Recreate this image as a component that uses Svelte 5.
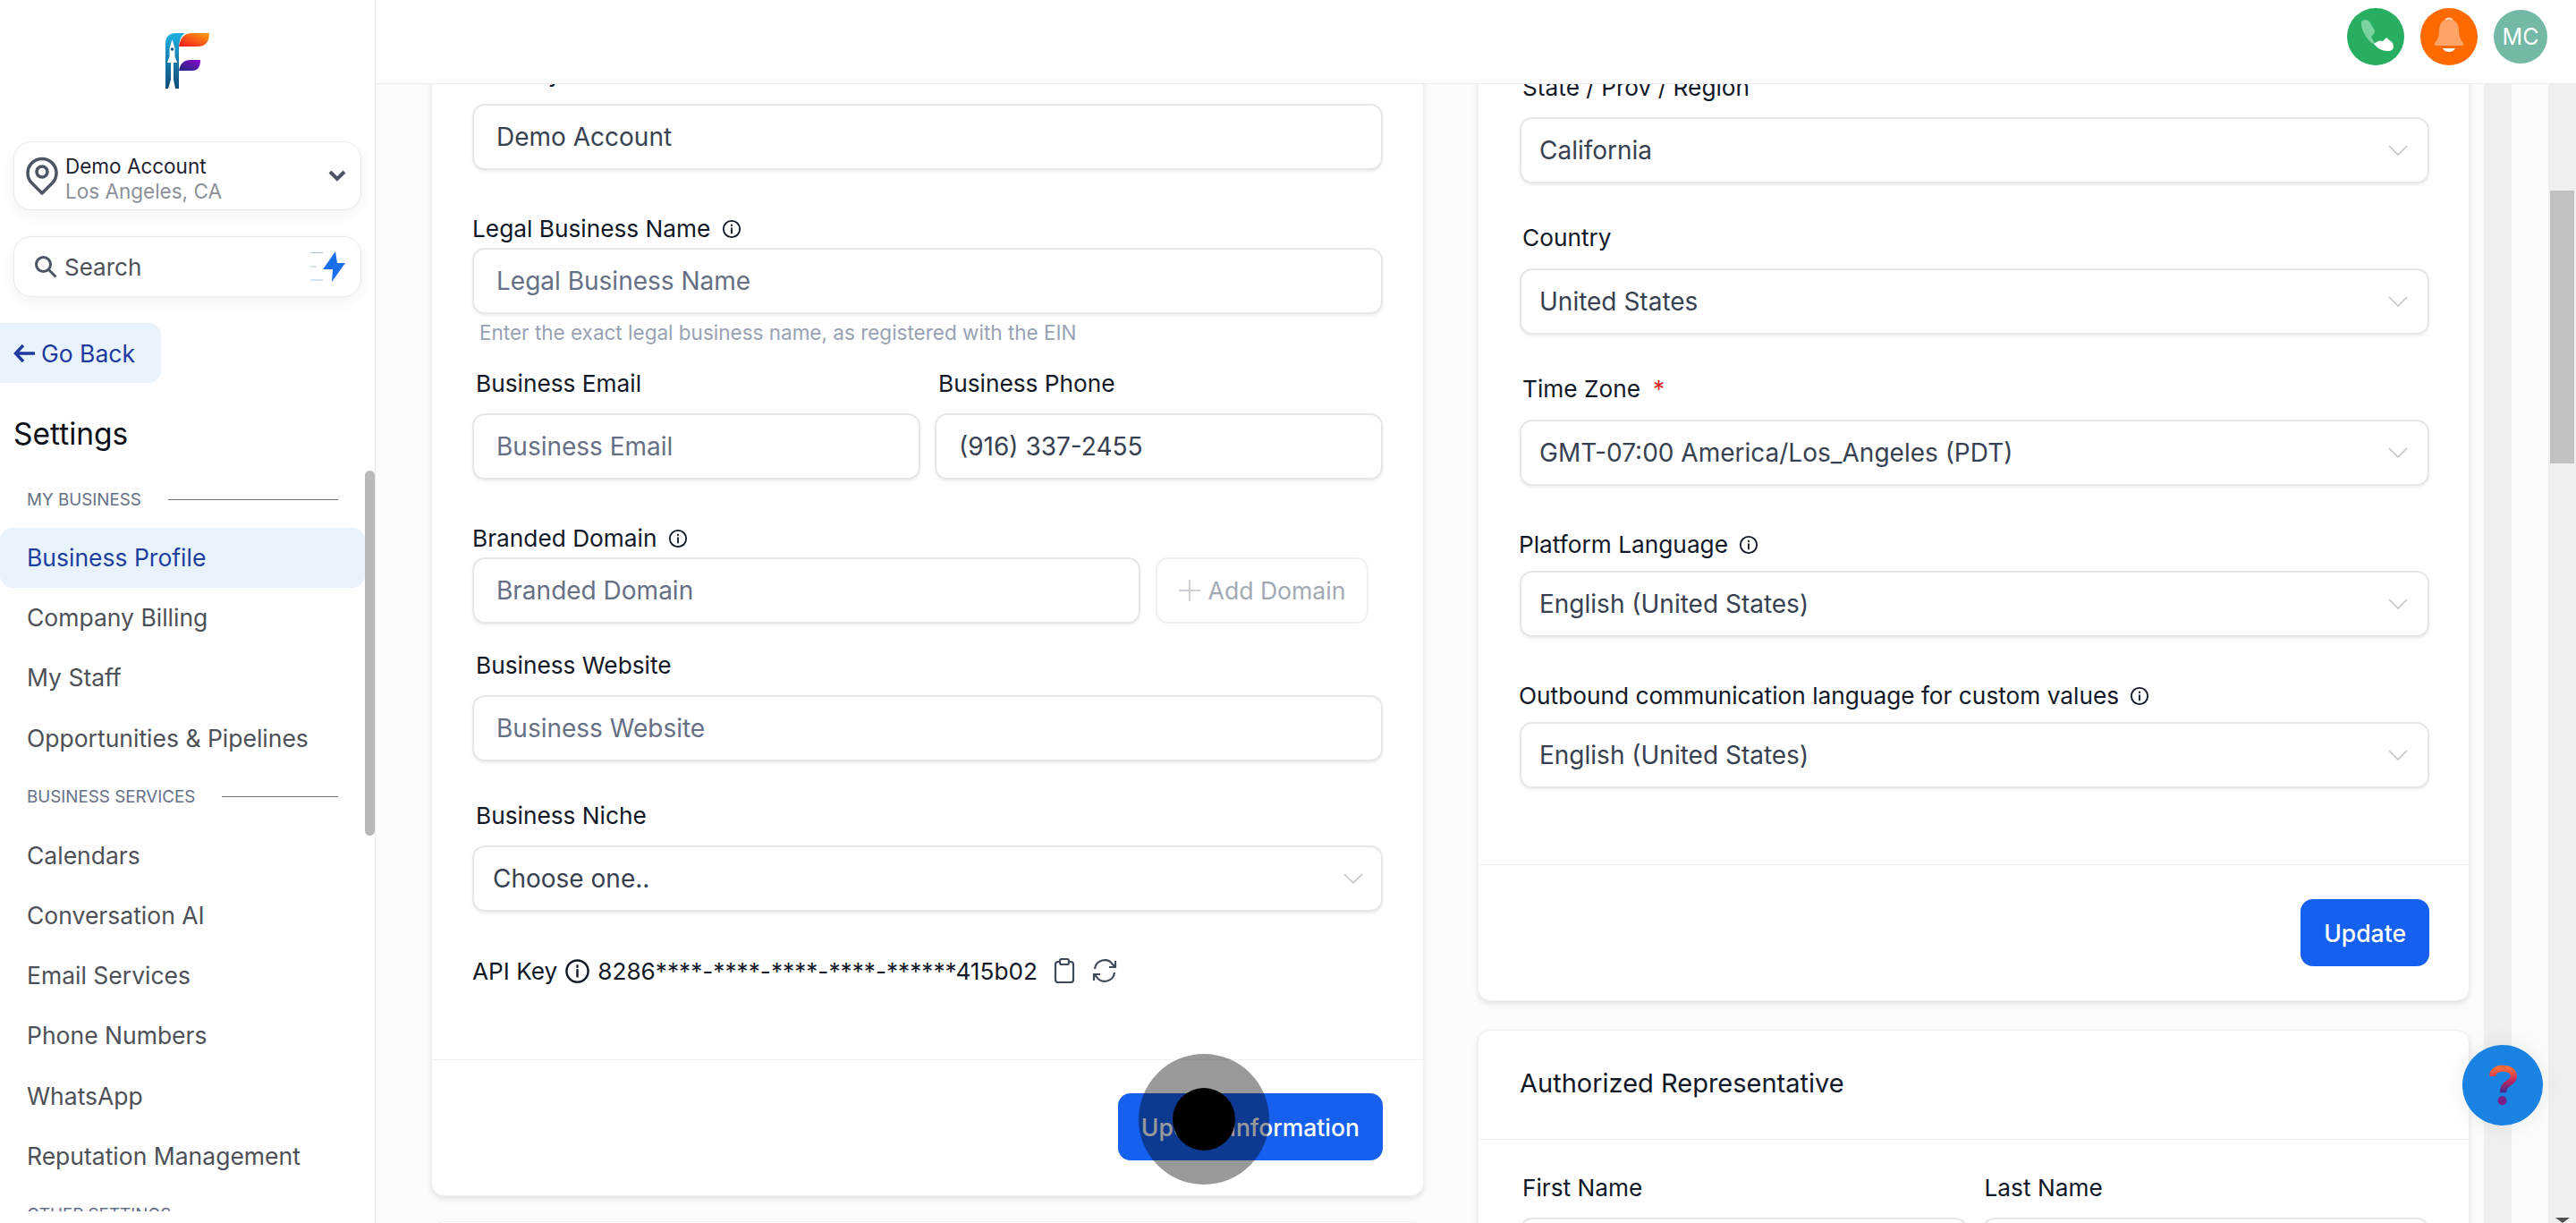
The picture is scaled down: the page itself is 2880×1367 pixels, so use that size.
<script>
  const sections = [
    { title: 'MY BUSINESS', items: ['Business Profile', 'Company Billing', 'My Staff', 'Opportunities & Pipelines'] },
    { title: 'BUSINESS SERVICES', items: ['Calendars', 'Conversation AI', 'Email Services', 'Phone Numbers', 'WhatsApp', 'Reputation Management'] },
    { title: 'OTHER SETTINGS', items: [] }
  ];
  const selects = [
    { label: 'Country', value: 'United States' },
    { label: 'Time Zone', value: 'GMT-07:00 America/Los_Angeles (PDT)', req: true }
  ];
  const langs = [
    { label: 'Platform Language', value: 'English (United States)' },
    { label: 'Outbound communication language for custom values', value: 'English (United States)' }
  ];
</script>

{#snippet info(size = 22)}
  <svg class="info" width={size} height={size} viewBox="0 0 24 24" fill="none" stroke="#111827" stroke-width="2">
    <circle cx="12" cy="12" r="10" />
    <path d="M12 11v6M12 7v1" stroke-linecap="round" />
  </svg>
{/snippet}

{#snippet chevron()}
  <svg class="chev" width="22" height="12" viewBox="0 0 22 12" fill="none" stroke="#c2c5cb" stroke-width="1.600">
    <path d="M1 1l10 10L21 1" />
  </svg>
{/snippet}

<div class="app">
  <aside class="side">
    <div class="logo">
      <svg width="50" height="63" viewBox="0 0 50 63">
        <defs>
          <linearGradient id="lg-stem" x1="0" y1="0" x2="0" y2="1">
            <stop offset="0" stop-color="#1fb1e0" />
            <stop offset="1" stop-color="#0c4a78" />
          </linearGradient>
          <linearGradient id="lg-top" x1="0" y1="1" x2="1" y2="0">
            <stop offset="0" stop-color="#f5141e" />
            <stop offset="1" stop-color="#fca311" />
          </linearGradient>
          <linearGradient id="lg-mid" x1="0" y1="1" x2="1" y2="0">
            <stop offset="0" stop-color="#1d2a7a" />
            <stop offset="1" stop-color="#8a08d0" />
          </linearGradient>
        </defs>
        <path d="M0 12Q0 0 12 0H22Q15 3 15 18V62H0Z" fill="url(#lg-stem)" />
        <path d="M15 15Q17 0 30 0H49Q49 15 36 15Z" fill="url(#lg-top)" />
        <path d="M15 42Q17 30 28 30H39Q39 42 30 42Z" fill="url(#lg-mid)" />
        <path d="M7.500 7L10.500 17V26L13 33H9L9 52L11 62H3L6 52L6 33H2L4.500 26V17Z" fill="#fff" />
        <circle cx="7.500" cy="18" r="1.800" fill="#155a88" />
      </svg>
    </div>

    <div class="pill account">
      <svg width="36" height="44" viewBox="0 0 36 44" fill="none" stroke="#4b5563" stroke-width="3.500">
        <path d="M18 41L6 29A16 16 0 1 1 30 29Z" stroke-linejoin="round" />
        <circle cx="18" cy="17" r="6" />
      </svg>
      <div class="acc-text">
        <div class="acc-name">Demo Account</div>
        <div class="acc-loc">Los Angeles, CA</div>
      </div>
      <svg class="acc-chev" width="20" height="13" viewBox="0 0 20 13" fill="none" stroke="#4b5563" stroke-width="4">
        <path d="M2 2l8 8 8-8" />
      </svg>
    </div>

    <div class="pill search">
      <svg width="26" height="26" viewBox="0 0 26 26" fill="none" stroke="#4b5563" stroke-width="3">
        <circle cx="10.500" cy="10.500" r="8" />
        <path d="M16.500 16.500L24.500 24.500" />
      </svg>
      <span class="search-txt">Search</span>
      <svg class="bolt" width="40" height="36" viewBox="0 0 40 36">
        <path d="M0 2.500H14M0 18H7M0 33H14" stroke="#a9c4e4" stroke-width="1" />
        <path d="M28 1L30 14H39L24 35L25 21H14Z" fill="#1a6fec" />
      </svg>
    </div>

    <div class="back">
      <svg width="24" height="22" viewBox="0 0 24 22" fill="none" stroke="#1e3a9e" stroke-width="3.500">
        <path d="M11 2L2.500 11l8.500 9M3 11h21" />
      </svg>
      <span>Go Back</span>
    </div>

    <h1 class="title">Settings</h1>

    <div class="nav-wrap">
      <nav class="nav">
        {#each sections as s}
          <div class="sec">
            <span>{s.title}</span>
            <i></i>
          </div>
          {#each s.items as item}
            <div class="item" class:active={item === 'Business Profile'}>{item}</div>
          {/each}
        {/each}
      </nav>
      <div class="nav-bar"><div class="nav-thumb"></div></div>
    </div>
  </aside>

  <div class="main">
    <header class="top">
      <div class="round phone">
        <svg width="42" height="42" viewBox="0 0 42 42">
          <path d="M5 4Q10 0 14 4L20 14Q20 18 16 21L21 30L15 27Q4 15 5 4Z" fill="#7dd3a0" />
          <path d="M19 29Q25 24 29 26L33 22L40 28Q43 36 36 37Q26 38 19 29Z" fill="#fff" />
        </svg>
      </div>
      <div class="round bell">
        <svg width="34" height="44" viewBox="0 0 34 44">
          <path d="M17 2Q28 3 28 16Q28 24 33 29Q34 32 31 32H3Q0 32 1 29Q6 24 6 16Q6 3 17 2Z" fill="#ffa366" />
          <path d="M10 35H24Q22 39 17 39Q12 39 10 35Z" fill="#fff" />
          <path d="M13 3Q17 0 21 3" stroke="#ffd9bf" stroke-width="2" fill="none" />
        </svg>
      </div>
      <div class="avatar">MC</div>
    </header>

    <div class="body">
      <div class="scroll">
        <div class="columns">
          <div class="col">
            <section class="card left-card">
              <div class="lbl">Friendly Business Name</div>
              <div class="input value">Demo Account</div>

              <div class="lbl tight legal">Legal Business Name {@render info()}</div>
              <div class="input ph">Legal Business Name</div>
              <div class="help">Enter the exact legal business name, as registered with the EIN</div>

              <div class="two email">
                <div>
                  <div class="lbl inset">Business Email</div>
                  <div class="input ph">Business Email</div>
                </div>
                <div>
                  <div class="lbl inset">Business Phone</div>
                  <div class="input value">(916) 337-2455</div>
                </div>
              </div>

              <div class="lbl tight branded">Branded Domain {@render info()}</div>
              <div class="domain">
                <div class="input ph">Branded Domain</div>
                <div class="add">
                  <svg width="24" height="24" viewBox="0 0 24 24" stroke="#ccd0d6" stroke-width="2"><path d="M12 0v24M0 12h24" /></svg>
                  Add Domain
                </div>
              </div>

              <div class="lbl inset website">Business Website</div>
              <div class="input ph">Business Website</div>

              <div class="lbl inset niche">Business Niche</div>
              <div class="input select value">Choose one.. {@render chevron()}</div>

              <div class="api">
                <span>API Key</span>
                {@render info(29)}
                <span>8286****-****-****-****-******415b02</span>
                <svg class="clip" width="24" height="28" viewBox="0 0 24 28" fill="none" stroke="#3f4a5c" stroke-width="2.200">
                  <rect x="2" y="4" width="20" height="23" rx="3" />
                  <rect x="7" y="1" width="10" height="6" rx="2" fill="#fff" />
                </svg>
                <svg width="28" height="28" viewBox="0 0 28 28" fill="none" stroke="#3f4a5c" stroke-width="2.200">
                  <path d="M3 12A11 11 0 0 1 23 7l3 3M26 3v7h-7M25 16A11 11 0 0 1 5 21l-3-3M2 25v-7h7" />
                </svg>
              </div>

              <div class="foot">
                <button class="btn">Update Information</button>
              </div>
            </section>
            <section class="card next-left"></section>
          </div>

          <div class="col">
            <section class="card right-card">
              <div class="lbl inset">State / Prov / Region</div>
              <div class="input select value short">California {@render chevron()}</div>

              {#each selects as f}
                <div class="lbl inset gap-country">{f.label}{#if f.req}<em>*</em>{/if}</div>
                <div class="input select value short">{f.value} {@render chevron()}</div>
              {/each}

              {#each langs as f}
                <div class="lbl lang">{f.label} {@render info()}</div>
                <div class="input select value short">{f.value} {@render chevron()}</div>
              {/each}

              <div class="foot right-foot">
                <button class="btn">Update</button>
              </div>
            </section>

            <section class="card rep-card">
              <div class="rep-head">Authorized Representative</div>
              <div class="two rep-body">
                <div>
                  <div class="lbl inset">First Name</div>
                  <div class="input"></div>
                </div>
                <div>
                  <div class="lbl inset">Last Name</div>
                  <div class="input"></div>
                </div>
              </div>
            </section>
          </div>
        </div>
      </div>

      <div class="track inner-track"></div>
      <div class="track-gap"></div>
      <div class="track outer-track">
        <div class="thumb"></div>
        <div class="arrow"></div>
      </div>

      <div class="help-fab">
        <svg width="31" height="46" viewBox="0 0 34 50" fill="none">
          <defs>
            <linearGradient id="q" x1="0" y1="0" x2="0" y2="1">
              <stop offset="0" stop-color="#ff6b3d" />
              <stop offset=".5" stop-color="#c2285c" />
              <stop offset="1" stop-color="#3f2a8e" />
            </linearGradient>
          </defs>
          <path d="M4 14C4 1 30 1 30 14C30 23 17 21 17 34" stroke="url(#q)" stroke-width="8" />
          <circle cx="16" cy="44" r="5.500" fill="#7a1f86" />
        </svg>
      </div>

      <div class="click-ring"><div class="click-dot"></div></div>
    </div>
  </div>
</div>

<style>
  :global(body) {
    margin: 0;
    background: #fff;
  }

  .app {
    display: flex;
    width: 2880px;
    height: 1367px;
    overflow: hidden;
    font-family: Inter, 'Liberation Sans', sans-serif;
    color: #111827;
  }

  .side {
    width: 420px;
    flex: none;
    box-sizing: border-box;
    border-right: 1px solid #e9ebee;
    background: #fff;
    display: flex;
    flex-direction: column;
  }

  .logo {
    height: 158px;
    box-sizing: border-box;
    padding: 37px 0 0 185px;
  }
  .logo svg {
    display: block;
  }

  .pill {
    margin: 0 15px 0 15px;
    box-sizing: border-box;
    border: 1px solid #e8eaed;
    border-radius: 20px;
    background: #fff;
    box-shadow: 0 6px 16px rgba(0, 0, 0, 0.05);
    display: flex;
    align-items: center;
  }

  .account {
    height: 77px;
    padding: 0 16px 0 13px;
    gap: 8px;
  }
  .acc-text {
    flex: 1;
    line-height: 28px;
    padding-top: 6px;
  }
  .acc-name {
    font-size: 22.500px;
    color: #1f2430;
  }
  .acc-loc {
    font-size: 22.500px;
    color: #8b9099;
  }

  .search {
    height: 68px;
    margin-top: 29px;
    padding: 0 16px 0 22px;
    gap: 8px;
  }
  .search-txt {
    flex: 1;
    font-size: 26px;
    color: #4d5157;
  }

  .back {
    width: 180px;
    height: 67px;
    margin-top: 29px;
    box-sizing: border-box;
    border-radius: 0 14px 14px 0;
    background: #e8f3fe;
    color: #1e3a9e;
    font-size: 26.500px;
    display: flex;
    align-items: center;
    gap: 7px;
    padding-left: 15px;
  }

  .title {
    margin: 36px 0 0 15px;
    font-size: 33.500px;
    line-height: 42px;
    font-weight: 400;
    color: #0b0f17;
  }

  .nav-wrap {
    display: flex;
    height: 828px;
    margin-top: 20px;
    overflow: hidden;
  }
  .nav {
    width: 408px;
    flex: none;
  }
  .nav-bar {
    width: 11px;
    flex: none;
  }
  .nav-thumb {
    height: 408px;
    border-radius: 6px;
    background: #b9b9b9;
  }

  .sec {
    height: 64px;
    display: flex;
    align-items: center;
    gap: 30px;
    padding: 0 30px 0 30px;
    font-size: 18.800px;
    color: #667085;
  }
  .sec i {
    flex: 1;
    height: 1px;
    background: #6b7280;
  }

  .item {
    height: 67.200px;
    line-height: 67.200px;
    padding-left: 30px;
    font-size: 26.500px;
    color: #4d5157;
  }
  .item.active {
    background: #e8f3fe;
    color: #1e3f9e;
    border-radius: 14px;
  }

  .main {
    flex: 1;
    min-width: 0;
    display: flex;
    flex-direction: column;
    background: #fbfdfd;
  }

  .top {
    height: 94px;
    flex: none;
    box-sizing: border-box;
    border-bottom: 1px solid #e9ebee;
    background: #fff;
    display: flex;
    align-items: center;
    justify-content: flex-end;
    gap: 18px;
    padding: 0 32px 11px 0;
  }
  .round {
    width: 64px;
    height: 64px;
    border-radius: 50%;
    display: flex;
    align-items: center;
    justify-content: center;
  }
  .phone {
    background: #27ae60;
  }
  .bell {
    background: #ff6a00;
  }
  .avatar {
    width: 60px;
    height: 60px;
    border-radius: 50%;
    background: #74b9a6;
    color: #fff;
    font-size: 25px;
    line-height: 60px;
    text-align: center;
  }

  .body {
    flex: 1;
    display: flex;
    min-height: 0;
    position: relative;
  }

  .scroll {
    flex: 1;
    min-width: 0;
    overflow: hidden;
  }

  .columns {
    display: grid;
    grid-template-columns: 1110px 1109px;
    gap: 60px;
    margin: -60px 0 0 62px;
  }
  .col {
    display: flex;
    flex-direction: column;
    gap: 32px;
  }

  .card {
    box-sizing: border-box;
    background: #fff;
    border: 1px solid #eef0f2;
    border-radius: 14px;
    box-shadow: 0 3px 6px rgba(0, 0, 0, 0.1);
  }
  .left-card {
    padding: 32px 45px 0;
    height: 1303px;
  }
  .next-left {
    height: 200px;
    margin-top: -4px;
    box-shadow: none;
  }
  .right-card {
    padding: 47px 44px 0 46px;
    height: 1085px;
  }
  .rep-card {
    height: 400px;
  }
  .rep-head {
    height: 122px;
    box-sizing: border-box;
    border-bottom: 1px solid #eef0f2;
    padding: 41px 0 0 46px;
    font-size: 29px;
    line-height: 36px;
    color: #111827;
  }
  .rep-body {
    padding: 38px 44px 0 46px;
    gap: 20px;
  }

  .lbl {
    height: 32px;
    line-height: 32px;
    margin-bottom: 17px;
    font-size: 26.250px;
    color: #111827;
    display: flex;
    align-items: center;
    white-space: pre;
  }
  .lbl.inset {
    padding-left: 4px;
  }
  .right-card .lbl.inset,
  .rep-card .lbl.inset {
    padding-left: 3px;
  }
  .lbl.tight {
    margin-bottom: 5px;
  }
  .lbl em {
    font-style: normal;
    color: #dc2626;
    margin-left: 14px;
  }
  .lbl.lang {
    margin-top: 50px;
    margin-bottom: 13px;
    margin-left: -1px;
  }
  .info {
    margin-left: 5px;
    flex: none;
  }

  .lbl.gap-country {
    margin-top: 45px;
    margin-bottom: 18px;
  }
  .legal {
    margin-top: 50px;
  }
  .email {
    margin-top: 28px;
  }
  .branded {
    margin-top: 50px;
  }
  .website {
    margin-top: 31px;
  }
  .niche {
    margin-top: 45px;
  }

  .input {
    height: 74px;
    box-sizing: border-box;
    border: 2px solid #e5e7eb;
    border-radius: 14px;
    background: #fff;
    box-shadow: 0 2px 3px rgba(0, 0, 0, 0.07);
    padding: 0 25px;
    font-size: 28px;
    display: flex;
    align-items: center;
    white-space: nowrap;
  }
  .value {
    color: #374151;
  }
  .ph {
    color: #667085;
  }
  .select {
    justify-content: space-between;
    padding: 0 20px 0 21px;
  }
  .select.short {
    padding: 0 22px 0 20px;
  }

  .help {
    height: 26px;
    line-height: 26px;
    margin: 8px 0 0 8px;
    font-size: 22.500px;
    color: #98a2b3;
  }

  .two {
    display: grid;
    grid-template-columns: 1fr 1fr;
    gap: 16px;
  }

  .domain {
    display: flex;
    gap: 17px;
    margin-right: 16px;
  }
  .domain .input {
    flex: 1;
  }
  .add {
    width: 238px;
    height: 74px;
    box-sizing: border-box;
    border: 2px solid #eef0f2;
    border-radius: 14px;
    display: flex;
    align-items: center;
    justify-content: center;
    gap: 9px;
    font-size: 26.600px;
    color: #a3a9b4;
  }

  .api {
    height: 32px;
    margin-top: 50px;
    display: flex;
    align-items: center;
    font-size: 26.200px;
    white-space: nowrap;
  }
  .api .info {
    margin: 0 8px 0 8px;
  }
  .api .clip {
    margin: 0 19px 0 18px;
  }

  .foot {
    margin: 83px -45px 0;
    border-top: 1px solid #eef0f2;
    padding: 37px 45px 0 0;
    display: flex;
    justify-content: flex-end;
  }
  .right-foot {
    margin: 85px -44px 0 -46px;
    padding: 38px 44px 0 0;
  }

  .btn {
    height: 75px;
    padding: 0 26px;
    border: 0;
    border-radius: 14px;
    background: #1660f0;
    color: #fff;
    font-family: inherit;
    font-size: 26.500px;
    font-weight: 500;
  }

  .help-fab {
    position: absolute;
    left: 2333px;
    top: 1074px;
    width: 90px;
    height: 90px;
    border-radius: 50%;
    background: #1a82e2;
    box-shadow: 0 0 30px rgba(0, 0, 0, 0.08);
    display: flex;
    align-items: center;
    justify-content: center;
  }

  .click-ring {
    position: absolute;
    left: 853px;
    top: 1084px;
    width: 146px;
    height: 146px;
    border-radius: 50%;
    background: rgba(0, 0, 0, 0.4);
    display: flex;
    align-items: center;
    justify-content: center;
  }
  .click-dot {
    width: 70px;
    height: 70px;
    border-radius: 50%;
    background: #000;
  }

  .track {
    flex: none;
    width: 31px;
    background: #f0f0f0;
  }
  .track-gap {
    flex: none;
    width: 41px;
  }
  .outer-track {
    position: relative;
    padding-top: 119px;
    box-sizing: border-box;
  }
  .thumb {
    height: 305px;
    margin: 0 2px;
    background: #c1c1c1;
  }
  .arrow {
    position: absolute;
    left: 8px;
    bottom: 0;
    border-style: solid;
    border-width: 6px 8px 0;
    border-color: #505050 transparent transparent;
  }
</style>
